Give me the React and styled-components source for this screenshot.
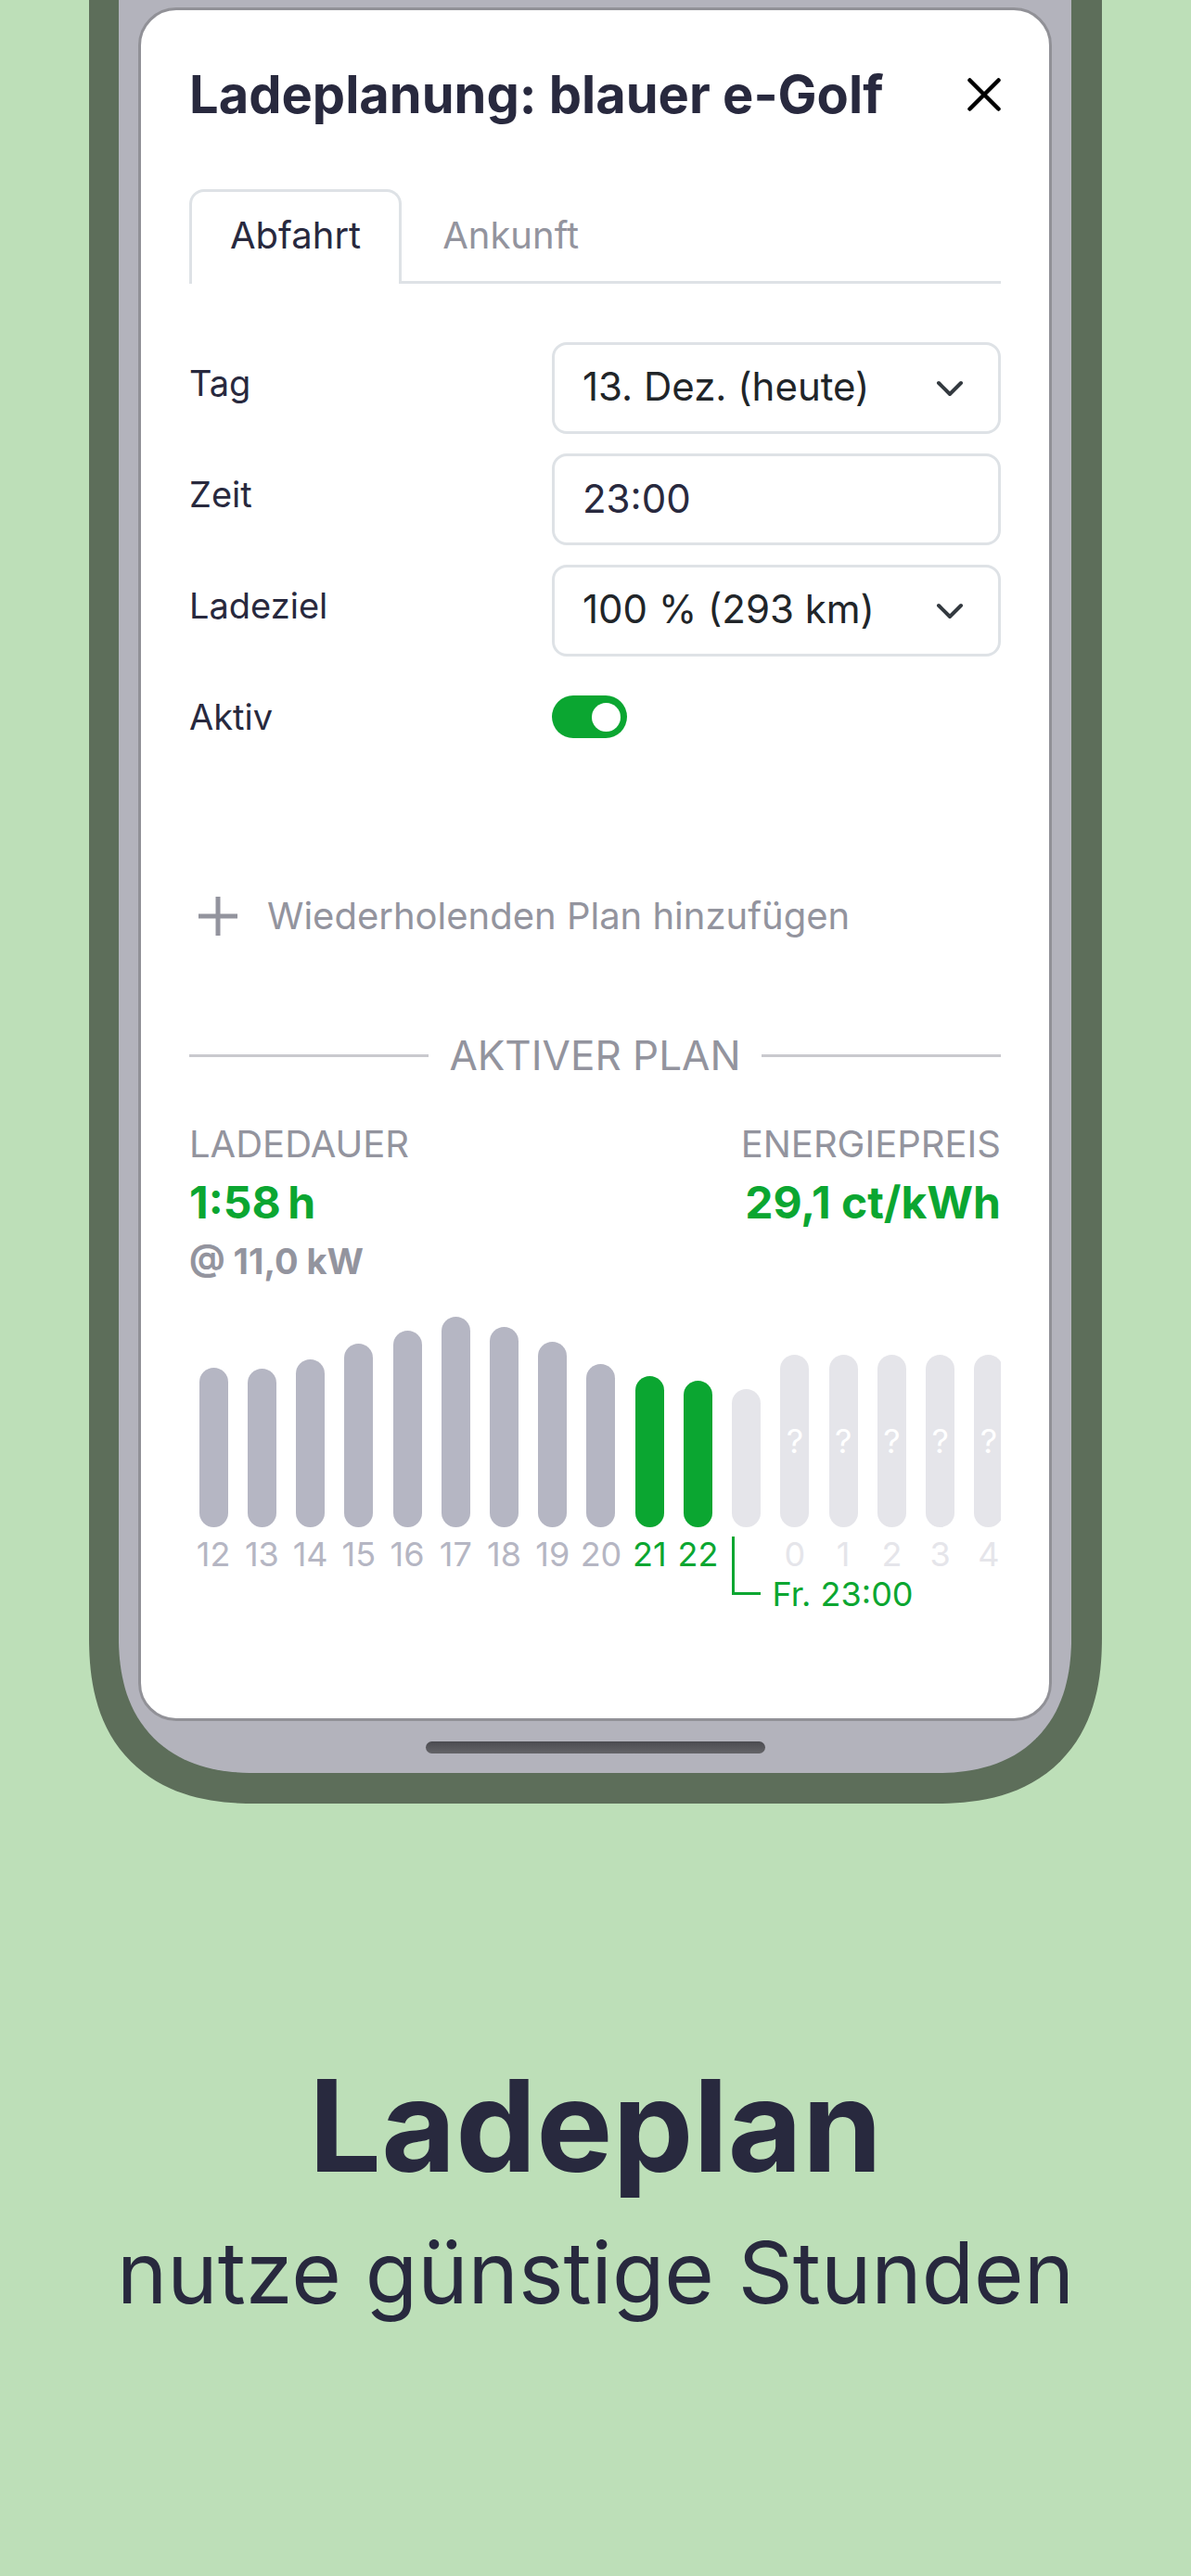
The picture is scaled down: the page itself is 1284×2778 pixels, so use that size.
import React, { useState } from "react";
import styled, { createGlobalStyle } from "styled-components";

const color = {
  page: "#bddfb8",
  frame: "#5d6e5a",
  screen: "#b3b3bc",
  edge: "#919197",
  text: "#28293e",
  option: "#212529",
  muted: "#93949e",
  line: "#dee2e6",
  rule: "#c9c9ce",
  past: "#b5b6c3",
  future: "#e5e5ea",
  green: "#0ba631",
};

const GlobalStyle = createGlobalStyle`
  *, *::before, *::after { box-sizing: border-box; }
  body {
    margin: 0;
    background: ${color.page};
    color: ${color.text};
    font-family: Inter, "Liberation Sans", sans-serif;
    font-weight: 440;
    font-size: 38px;
    line-height: 48px;
  }
  button, input, select { font: inherit; color: inherit; }
`;

const Page = styled.main`
  min-height: 100vh;
  padding: 0 96px;
`;

const Phone = styled.div`
  padding: 8px 21px 21px;
  border: 33px solid ${color.frame};
  border-top: 0;
  border-left-width: 32px;
  border-radius: 0 0 180px 180px;
  corner-shape: superellipse(1.26);
  background: ${color.screen};
`;

const Sheet = styled.section`
  padding: 61px 52px 110px;
  border: 3px solid ${color.edge};
  border-radius: 41px;
  background: #fff;
`;

const Header = styled.header`
  display: flex;
  align-items: center;
  justify-content: space-between;
  margin-bottom: 72px;
`;

const Title = styled.h1`
  margin: 0;
  font-size: 56px;
  font-weight: 700;
  line-height: 60px;
`;

const CloseButton = styled.button`
  display: flex;
  padding: 0;
  border: 0;
  background: none;
  color: #000;
`;

const Tabs = styled.div`
  display: flex;
  margin-bottom: 63px;

  &::after {
    content: "";
    flex: 1;
    border-bottom: 3px solid ${color.line};
  }
`;

const Tab = styled.button`
  padding: ${(p) => (p.$active ? "23px 41px 28px" : "26px 44px 25px")};
  border: solid ${color.line};
  border-width: ${(p) => (p.$active ? "3px 3px 0" : "0 0 3px")};
  border-radius: ${(p) => (p.$active ? "16px 16px 0 0" : "0")};
  background: none;
  color: ${(p) => (p.$active ? color.text : color.muted)};
  font-size: 40px;
`;

const Form = styled.form`
  display: grid;
  gap: 21px;
`;

const Row = styled.div`
  display: grid;
  grid-template-columns: 391fr 484fr;
  align-items: start;
  min-height: 99px;
`;

const Label = styled.label`
  padding-top: 20px;
`;

const Field = styled.div`
  display: grid;
  align-items: center;

  > * {
    grid-area: 1 / 1;
  }

  svg {
    justify-self: end;
    margin-right: 39px;
    pointer-events: none;
  }
`;

const control = `
  width: 100%;
  height: 99px;
  margin: 0;
  padding: 0 30px 3px;
  border: 3px solid ${color.line};
  border-radius: 16px;
  background: #fff;
  appearance: none;
  font-size: 42px;
`;

const Select = styled.select`
  ${control}
  color: ${color.option};
`;

const TextInput = styled.input`
  ${control}
`;

const Switch = styled.input`
  display: flex;
  align-items: center;
  justify-content: ${(p) => (p.checked ? "flex-end" : "flex-start")};
  width: 81px;
  height: 46px;
  margin: 21px 0 0;
  padding: 0 7px;
  border-radius: 23px;
  background: ${(p) => (p.checked ? color.green : color.past)};
  appearance: none;

  &::before {
    content: "";
    width: 31px;
    height: 31px;
    border-radius: 50%;
    background: #fff;
  }
`;

const AddButton = styled.button`
  display: flex;
  align-items: center;
  gap: 32px;
  margin: 136px 0 100px;
  padding: 0 10px;
  border: 0;
  background: none;
  color: ${color.muted};
  font-size: 40px;
`;

const Divider = styled.h2`
  display: flex;
  align-items: center;
  gap: 22px;
  margin: 0 0 46px;
  color: ${color.muted};
  font-size: 44px;
  font-weight: 400;
  line-height: 52px;
  text-transform: uppercase;

  &::before,
  &::after {
    content: "";
    flex: 1;
    height: 3px;
    background: ${color.rule};
  }
`;

const Stats = styled.div`
  display: flex;
  justify-content: space-between;
  margin-bottom: 36px;
`;

const Stat = styled.div`
  display: grid;
  align-content: start;
  gap: 7px;
  color: ${color.muted};
  text-align: ${(p) => p.$align || "left"};
`;

const StatName = styled.div`
  font-size: 40px;
  font-weight: 400;
  text-transform: uppercase;
`;

const StatValue = styled.div`
  color: ${color.green};
  font-size: 48px;
  font-weight: 700;
  line-height: 64px;
`;

const StatNote = styled.div`
  font-weight: 700;
`;

const ChartClip = styled.div`
  overflow: hidden;
`;

const Chart = styled.div`
  display: grid;
  grid-template-columns: repeat(17, minmax(0, 1fr));
  grid-template-rows: 227px 53px 43px;
  margin-right: -13px;
  font-size: 36px;
`;

const tone = { past: color.past, active: color.green, future: color.future };

const Bar = styled.div`
  display: flex;
  grid-row: 1;
  align-items: center;
  align-self: end;
  justify-content: center;
  justify-self: center;
  width: 31px;
  border-radius: 16px;
  background: ${(p) => tone[p.$tone]};
  color: #fff;
`;

const Hour = styled.div`
  display: flex;
  grid-row: 2;
  justify-content: center;
  padding-top: 5px;
  color: ${(p) => tone[p.$tone]};
`;

const Target = styled.div`
  display: flex;
  grid-row: 2 / 4;
  grid-column: 12 / -1;
  gap: 13px;
  align-items: flex-end;
  padding: 10px 0 0 10px;
  color: ${color.green};

  &::before {
    content: "";
    width: 31px;
    height: 63px;
    margin-bottom: 23px;
    border: solid ${color.green};
    border-width: 0 0 3px 3px;
  }
`;

const HomeBar = styled.div`
  width: 366px;
  height: 13px;
  margin: 22px auto 0;
  border-radius: 7px;
  background: linear-gradient(#4b4b50, #646468);
`;

const Caption = styled.footer`
  margin: 272px -96px 0;
  text-align: center;
`;

const Headline = styled.h2`
  margin: 0;
  font-size: 138px;
  font-weight: 700;
  line-height: 150px;
`;

const Tagline = styled.p`
  margin: 0;
  font-size: 92px;
  font-weight: 400;
  line-height: 168px;
`;

const hours = [
  [12, 172, "past"],
  [13, 171, "past"],
  [14, 181, "past"],
  [15, 198, "past"],
  [16, 212, "past"],
  [17, 227, "past"],
  [18, 216, "past"],
  [19, 200, "past"],
  [20, 176, "past"],
  [21, 163, "active"],
  [22, 158, "active"],
  [null, 149, "future"],
  [0, 186, "future", true],
  [1, 186, "future", true],
  [2, 186, "future", true],
  [3, 186, "future", true],
  [4, 186, "future", true],
];

const Chevron = () => (
  <svg width="32" height="24" viewBox="0 0 32 24" fill="none" stroke="#343a40" strokeWidth="4" strokeLinecap="round" strokeLinejoin="round" aria-hidden="true">
    <path d="M4 6l12 12 12-12" />
  </svg>
);

export default function App() {
  const [tab, setTab] = useState("Abfahrt");
  const [time, setTime] = useState("23:00");
  const [active, setActive] = useState(true);

  return (
    <>
      <GlobalStyle />
      <Page>
        <Phone>
          <Sheet>
            <Header>
              <Title>Ladeplanung: blauer e-Golf</Title>
              <CloseButton type="button" aria-label="Schließen">
                <svg width="36" height="36" viewBox="0 0 36 36" fill="none" stroke="currentColor" strokeWidth="4.5" strokeLinecap="round">
                  <path d="M2.5 2.5l31 31M33.5 2.5l-31 31" />
                </svg>
              </CloseButton>
            </Header>

            <Tabs role="tablist">
              {["Abfahrt", "Ankunft"].map((name) => (
                <Tab key={name} type="button" role="tab" aria-selected={tab === name} $active={tab === name} onClick={() => setTab(name)}>
                  {name}
                </Tab>
              ))}
            </Tabs>

            <Form>
              <Row>
                <Label htmlFor="day">Tag</Label>
                <Field>
                  <Select id="day">
                    <option>13. Dez. (heute)</option>
                  </Select>
                  <Chevron />
                </Field>
              </Row>
              <Row>
                <Label htmlFor="time">Zeit</Label>
                <Field>
                  <TextInput id="time" value={time} onChange={(e) => setTime(e.target.value)} />
                </Field>
              </Row>
              <Row>
                <Label htmlFor="goal">Ladeziel</Label>
                <Field>
                  <Select id="goal">
                    <option>100 % (293 km)</option>
                  </Select>
                  <Chevron />
                </Field>
              </Row>
              <Row>
                <Label htmlFor="active">Aktiv</Label>
                <Switch id="active" type="checkbox" role="switch" checked={active} onChange={(e) => setActive(e.target.checked)} />
              </Row>
            </Form>

            <AddButton type="button">
              <svg width="42" height="42" viewBox="0 0 42 42" stroke="currentColor" strokeWidth="5" aria-hidden="true">
                <path d="M21 0v42M0 21h42" />
              </svg>
              Wiederholenden Plan hinzufügen
            </AddButton>

            <Divider>Aktiver Plan</Divider>

            <Stats>
              <Stat>
                <StatName>Ladedauer</StatName>
                <StatValue>1:58{"\u202f"}h</StatValue>
                <StatNote>@ 11,0 kW</StatNote>
              </Stat>
              <Stat $align="right">
                <StatName>Energiepreis</StatName>
                <StatValue>29,1 ct/kWh</StatValue>
              </Stat>
            </Stats>

            <ChartClip>
              <Chart>
                {hours.map(([hour, height, kind, unknown], i) => (
                  <React.Fragment key={i}>
                    <Bar $tone={kind} style={{ height, gridColumn: i + 1 }}>
                      {unknown && "?"}
                    </Bar>
                    <Hour $tone={kind} style={{ gridColumn: i + 1 }}>
                      {hour}
                    </Hour>
                  </React.Fragment>
                ))}
                <Target>Fr. 23:00</Target>
              </Chart>
            </ChartClip>
          </Sheet>
          <HomeBar />
        </Phone>

        <Caption>
          <Headline>Ladeplan</Headline>
          <Tagline>nutze günstige Stunden</Tagline>
        </Caption>
      </Page>
    </>
  );
}
